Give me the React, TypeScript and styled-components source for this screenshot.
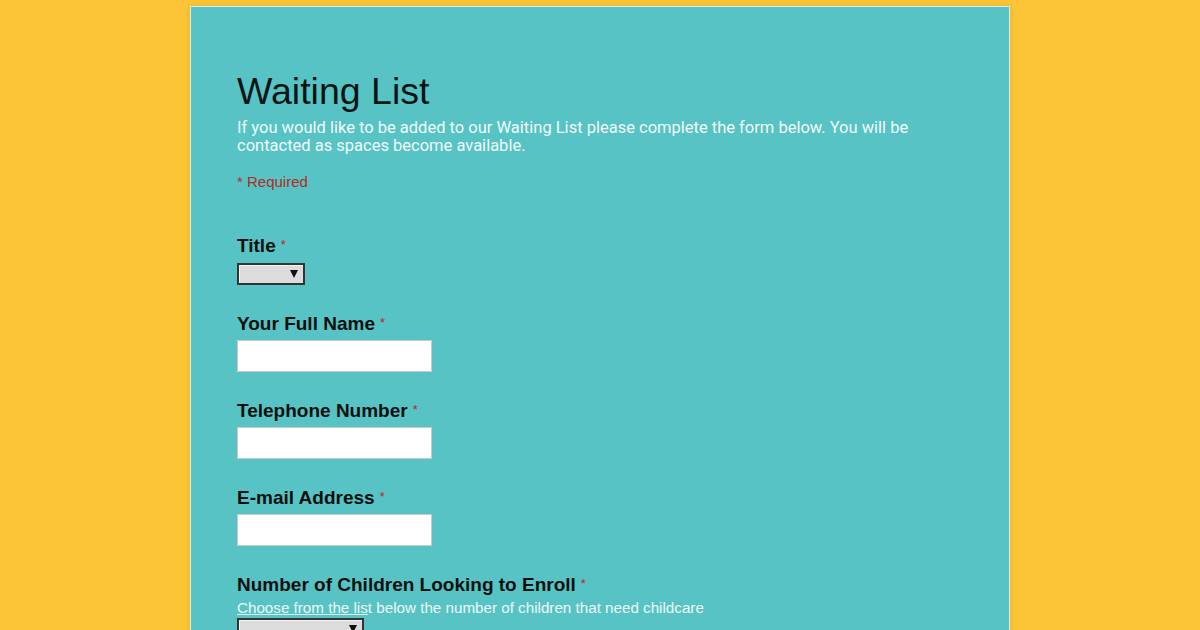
import React from "react";
import styled, { createGlobalStyle } from "styled-components";

const GlobalStyle = createGlobalStyle`
  html, body {
    margin: 0;
    padding: 0;
    background: #fbc537;
    height: 630px;
    overflow: hidden;
  }
`;

const Card = styled.main`
  width: 820px;
  margin: 6px auto 0;
  background: #57c3c4;
  border: 1px solid #d9f0ee;
  box-shadow: 0 0 4px rgba(180, 120, 20, 0.35);
  padding: 62px 46px 40px;
  box-sizing: border-box;
  min-height: 700px;
`;

const Title = styled.h1`
  margin: 0;
  font-family: "Liberation Sans", Arial, sans-serif;
  font-weight: 400;
  font-size: 37.5px;
  line-height: 44px;
  color: #0a1414;
`;

const Description = styled.p`
  margin: 6px 0 0;
  width: 700px;
  font-family: Roboto, "Liberation Sans", sans-serif;
  font-size: 16.5px;
  line-height: 18px;
  color: #f2fafa;
`;

const RequiredNote = styled.p`
  margin: 18px 0 0;
  font-family: "Liberation Sans", Arial, sans-serif;
  font-size: 15px;
  color: #b62a1e;
`;

const Fields = styled.div`
  display: flex;
  flex-direction: column;
  gap: 27px;
  margin-top: 44px;
`;

const Field = styled.div`
  display: flex;
  flex-direction: column;
  align-items: flex-start;
`;

const Label = styled.label`
  font-family: "Liberation Sans", Arial, sans-serif;
  font-weight: 700;
  font-size: 19px;
  line-height: 22px;
  color: #0a0f0f;
  margin-bottom: 5px;
`;

const Star = styled.span`
  color: #c8201a;
  font-size: 13px;
  font-weight: 400;
  margin-left: 5px;
  vertical-align: 3px;
`;

const Help = styled.div`
  font-family: "Liberation Sans", Arial, sans-serif;
  font-size: 15.2px;
  line-height: 18px;
  color: #eef8f8;
  margin-top: -2px;

  u {
    text-decoration-color: rgba(255, 255, 255, 0.8);
  }
`;

const TextInput = styled.input`
  width: 195px;
  height: 32px;
  box-sizing: border-box;
  border: 1px solid #c9c9c9;
  background: #fff;
  margin: 0;
`;

const Select = styled.div<{ $width: number }>`
  width: ${(p) => p.$width}px;
  height: 22px;
  box-sizing: border-box;
  border: 2px solid #2f3535;
  background: #dcdcdc;
  box-shadow: inset 1px 1px 0 #f4f4f4;
  display: flex;
  align-items: center;
  justify-content: flex-end;
  padding-right: 5px;
  margin-top: 1px;
`;

const Arrow = styled.span`
  width: 0;
  height: 0;
  border-left: 4px solid transparent;
  border-right: 4px solid transparent;
  border-top: 8px solid #111;
`;

function Required() {
  return <Star>*</Star>;
}

export default function App() {
  return (
    <>
      <GlobalStyle />
      <Card>
        <Title>Waiting List</Title>
        <Description>
          If you would like to be added to our Waiting List please complete the
          form below. You will be contacted as spaces become available.
        </Description>
        <RequiredNote>* Required</RequiredNote>
        <Fields>
          <Field>
            <Label>
              Title
              <Required />
            </Label>
            <Select $width={68}>
              <Arrow />
            </Select>
          </Field>
          <Field>
            <Label>
              Your Full Name
              <Required />
            </Label>
            <TextInput />
          </Field>
          <Field>
            <Label>
              Telephone Number
              <Required />
            </Label>
            <TextInput />
          </Field>
          <Field>
            <Label>
              E-mail Address
              <Required />
            </Label>
            <TextInput />
          </Field>
          <Field>
            <Label>
              Number of Children Looking to Enroll
              <Required />
            </Label>
            <Help>
              <u>Choose from the lis</u>t below the number of children that
              need childcare
            </Help>
            <Select $width={127}>
              <Arrow />
            </Select>
          </Field>
        </Fields>
      </Card>
    </>
  );
}
